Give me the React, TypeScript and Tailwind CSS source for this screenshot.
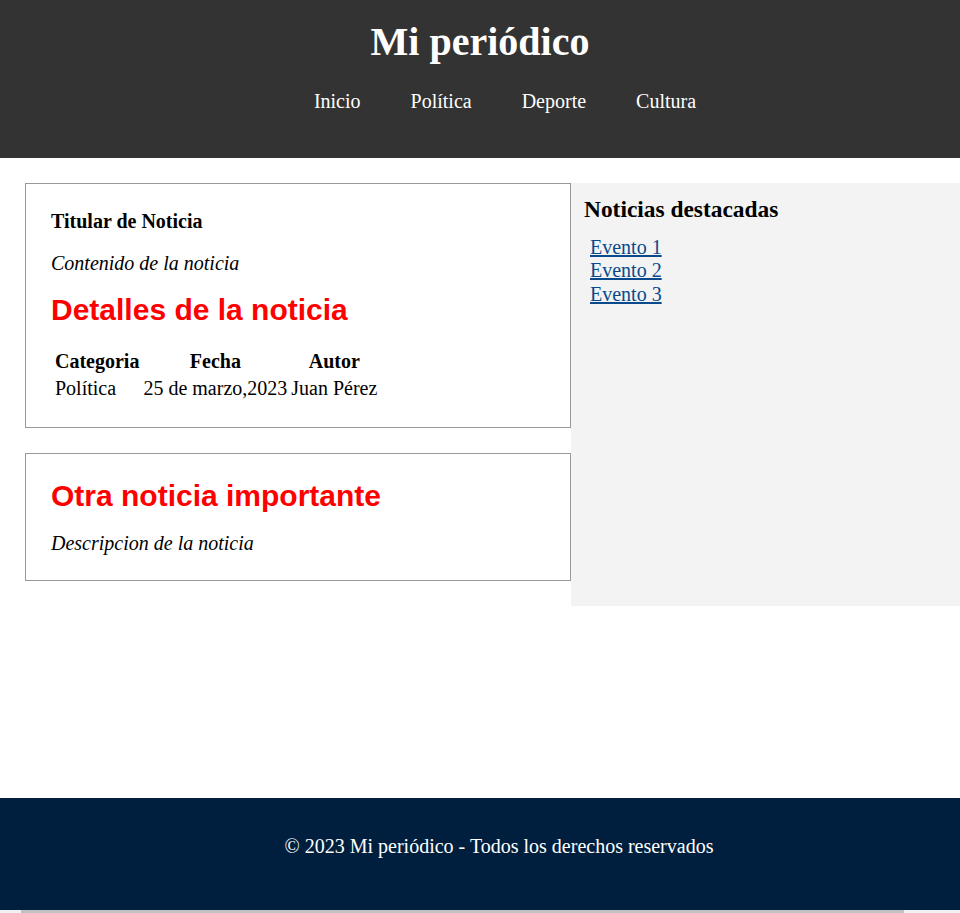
const serif = 'font-["Liberation_Serif","Times_New_Roman",serif]';

const navItems = ['Inicio', 'Política', 'Deporte', 'Cultura'];
const eventos = ['Evento 1', 'Evento 2', 'Evento 3'];

function Header() {
  return (
    <header className="bg-[#333333] pt-[19px] pb-[45px] text-white">
      <h1 className="text-center text-[40px] font-bold leading-[46px]">Mi periódico</h1>
      <nav className="mt-[25px] flex justify-center gap-[50px] pl-[50px] text-[20px] leading-[23px]">
        {navItems.map((item) => (
          <a key={item} href="#" className="text-white">
            {item}
          </a>
        ))}
      </nav>
    </header>
  );
}

function NewsTable() {
  return (
    <table className="mt-[19px] ml-[1px] border-separate border-spacing-[2px] text-[20px] leading-[23px]">
      <thead>
        <tr>
          <th className="p-[1px] font-bold">Categoria</th>
          <th className="p-[1px] font-bold">Fecha</th>
          <th className="p-[1px] font-bold">Autor</th>
        </tr>
      </thead>
      <tbody>
        <tr>
          <td className="p-[1px]">Política</td>
          <td className="p-[1px]">25 de marzo,2023</td>
          <td className="p-[1px]">Juan Pérez</td>
        </tr>
      </tbody>
    </table>
  );
}

function Sidebar() {
  return (
    <aside className="flex-1 bg-[#f3f3f3] px-[13px] pt-[13px]">
      <h3 className="text-[23.4px] font-bold leading-[27px]">Noticias destacadas</h3>
      <ul className="mt-[13px] pl-[6px] text-[20px] leading-[23.3px]">
        {eventos.map((ev) => (
          <li key={ev}>
            <a href="#" className="text-[#0a4a8c] underline">
              {ev}
            </a>
          </li>
        ))}
      </ul>
    </aside>
  );
}

export default function App() {
  return (
    <div className={`${serif} bg-white text-black`}>
      <Header />

      <main className="h-[640px] pl-[25px] pt-[25px]">
        <div className="flex">
          <div className="flex w-[546px] flex-col">
            <article className="mb-[25px] border border-[#999999] px-[25px] pt-[26px] pb-[24px]">
              <h4 className="text-[20px] font-bold leading-[23px]">Titular de Noticia</h4>
              <p className="mt-[19px] text-[20px] italic leading-[23px]">Contenido de la noticia</p>
              <h2 className='mt-[18px] font-["Liberation_Sans",Arial,sans-serif] text-[30px] font-bold leading-[34.5px] text-[#ff0000]'>
                Detalles de la noticia
              </h2>
              <NewsTable />
            </article>

            <article className="mb-[25px] border border-[#999999] px-[25px] pt-[25px] pb-[25px]">
              <h2 className='font-["Liberation_Sans",Arial,sans-serif] text-[30px] font-bold leading-[34.5px] text-[#ff0000]'>
                Otra noticia importante
              </h2>
              <p className="mt-[19px] text-[20px] italic leading-[23px]">Descripcion de la noticia</p>
            </article>
          </div>

          <Sidebar />
        </div>
      </main>

      <footer className="h-[112px] bg-[#001f3f] pl-[38px] pt-[37px] text-center text-[20px] leading-[23px] text-white">
        <p>© 2023 Mi periódico - Todos los derechos reservados</p>
      </footer>

      <div className="h-[3px] bg-[#f1f1f1] pl-[21px] pr-[56px]">
        <div className="h-full bg-[#c1c1c1]" />
      </div>
    </div>
  );
}
